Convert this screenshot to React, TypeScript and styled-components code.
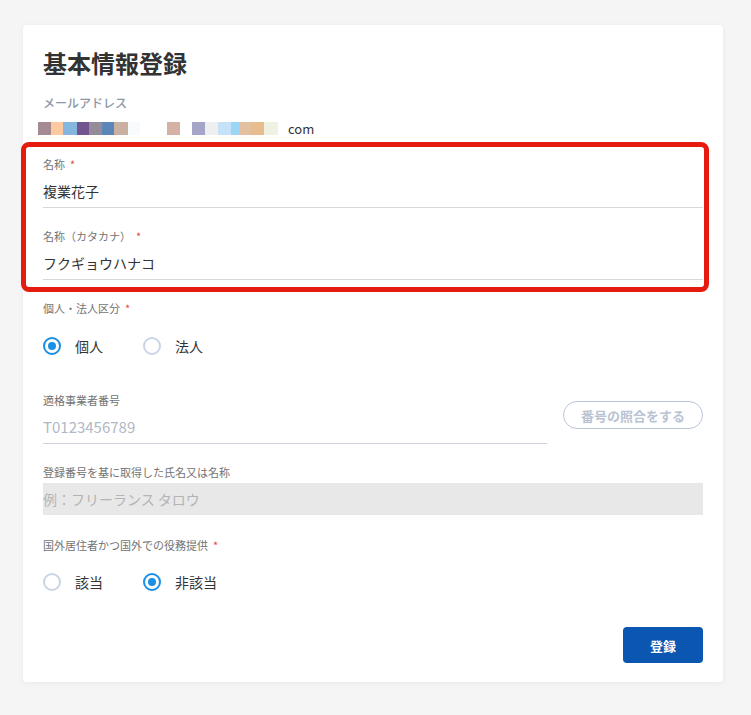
import React from 'react';
import styled, { createGlobalStyle } from 'styled-components';

const GlobalStyle = createGlobalStyle`
	body {
		margin: 0;
		background: #f5f5f5;
		font-family: 'Noto Sans CJK JP', 'Noto Sans', sans-serif;
	}
`;

const Page = styled.div`
	padding: 25px 28px 30px 23px;
`;

const Card = styled.div`
	width: 700px;
	box-sizing: border-box;
	padding: 20px 20px 19px;
	background: #fff;
	border-radius: 4px;
	box-shadow: 0 1px 6px rgba(0, 0, 0, 0.05);
`;

const Title = styled.h1`
	margin: 0;
	font-size: 24px;
	line-height: 36px;
	font-weight: 700;
	color: #333;
`;

const EmailLabel = styled.div`
	margin-top: 14px;
	font-size: 12px;
	line-height: 16px;
	font-weight: 500;
	color: #8b96a6;
`;

const EmailRow = styled.div`
	margin-top: 7px;
	margin-left: -5px;
	height: 20px;
	display: flex;
	align-items: center;
`;

const Pixel = styled.span<{ $w: number; $c: string; $ml?: number }>`
	display: inline-block;
	width: ${(p) => p.$w}px;
	height: 13px;
	margin-left: ${(p) => p.$ml || 0}px;
	background: ${(p) => p.$c};
`;

const EmailDomain = styled.span`
	margin-left: 10px;
	font-size: 13px;
	color: #333;
`;

const Highlight = styled.div`
	position: relative;
	margin-top: 18px;

	&::after {
		content: '';
		position: absolute;
		top: -14px;
		left: -22px;
		right: -6px;
		bottom: -12px;
		border: 5px solid #e61b10;
		border-radius: 8px;
		pointer-events: none;
	}
`;

const Field = styled.div<{ $mt?: number }>`
	display: flex;
	flex-direction: column;
	margin-top: ${(p) => p.$mt || 0}px;
`;

const Label = styled.label`
	font-size: 11px;
	line-height: 16px;
	color: #737373;
`;

const Required = styled.span`
	margin-left: 5px;
	color: #e5483c;
	font-size: 11px;
`;

const TextInput = styled.input<{ $line?: string }>`
	height: 36px;
	box-sizing: border-box;
	padding: 3px 0 0;
	border: none;
	border-bottom: 1px solid ${(p) => p.$line || '#d8d8d8'};
	background: transparent;
	font-family: inherit;
	font-size: 14px;
	color: #333;
	outline: none;
	width: 100%;

	&::placeholder {
		color: #b1b8c4;
		font-size: 15px;
	}
`;

const RadioRow = styled.div<{ $mt: number }>`
	display: flex;
	align-items: center;
	gap: 40px;
	height: 24px;
	margin-top: ${(p) => p.$mt}px;
`;

const RadioOption = styled.label`
	display: flex;
	align-items: center;
	gap: 14px;
	font-size: 14px;
	color: #333;
`;

const RadioMark = styled.span<{ $checked?: boolean }>`
	width: 18px;
	height: 18px;
	box-sizing: border-box;
	border-radius: 50%;
	border: 2px solid ${(p) => (p.$checked ? '#1a8fe3' : '#c9d5e4')};
	display: flex;
	align-items: center;
	justify-content: center;

	&::after {
		content: '';
		width: 8px;
		height: 8px;
		border-radius: 50%;
		background: ${(p) => (p.$checked ? '#1a8fe3' : 'transparent')};
	}
`;

const InvoiceRow = styled.div`
	display: grid;
	grid-template-columns: 1fr 140px;
	gap: 16px;
	align-items: center;
	margin-top: 34px;
`;

const VerifyButton = styled.button`
	height: 28px;
	border: 1px solid #b9c5d8;
	border-radius: 14px;
	background: #fff;
	color: #b9c3d3;
	font-family: inherit;
	font-size: 13px;
	font-weight: 700;
	padding: 0;
	margin-top: -6px;
`;

const GrayBox = styled.input`
	margin-top: 3px;
	height: 32px;
	box-sizing: border-box;
	border: none;
	padding: 0;
	background: #e8e8e8;
	font-family: inherit;
	font-size: 14px;
	outline: none;

	&::placeholder {
		color: #b4b4b4;
	}
`;

const Footer = styled.div`
	display: flex;
	justify-content: flex-end;
	margin-top: 33px;
`;

const SubmitButton = styled.button`
	width: 80px;
	height: 36px;
	border: none;
	border-radius: 4px;
	background: #0a56b0;
	color: #fff;
	font-family: inherit;
	font-size: 13px;
	font-weight: 700;
`;

const pixels: { w: number; c: string; ml?: number }[] = [
	{ w: 13, c: '#a68a93' },
	{ w: 12, c: '#fdc99e' },
	{ w: 14, c: '#85b6e0' },
	{ w: 12, c: '#72548e' },
	{ w: 13, c: '#958c9a' },
	{ w: 12, c: '#5a86b8' },
	{ w: 14, c: '#c9b0a0' },
	{ w: 12, c: '#f8fbfb' },
	{ w: 13, c: '#d4b0a5', ml: 27 },
	{ w: 13, c: '#a5a5c8', ml: 12 },
	{ w: 13, c: '#efefef' },
	{ w: 13, c: '#c5e2f8' },
	{ w: 8, c: '#9dd5f5' },
	{ w: 12, c: '#e2c0a0' },
	{ w: 13, c: '#e8bd8d' },
	{ w: 14, c: '#eff2e2' },
];

const App: React.FC = () => {
	return (
		<>
			<GlobalStyle />
			<Page>
				<Card>
					<Title>基本情報登録</Title>
					<EmailLabel>メールアドレス</EmailLabel>
					<EmailRow>
						{pixels.map((p, i) => (
							<Pixel key={i} $w={p.w} $c={p.c} $ml={p.ml} />
						))}
						<EmailDomain>com</EmailDomain>
					</EmailRow>

					<Highlight>
						<Field>
							<Label>
								名称<Required>*</Required>
							</Label>
							<TextInput readOnly defaultValue="複業花子" />
						</Field>
						<Field $mt={20}>
							<Label>
								名称（カタカナ）<Required>*</Required>
							</Label>
							<TextInput readOnly defaultValue="フクギョウハナコ" />
						</Field>
					</Highlight>

					<Field $mt={20}>
						<Label>
							個人・法人区分<Required>*</Required>
						</Label>
						<RadioRow $mt={18}>
							<RadioOption>
								<RadioMark $checked />
								個人
							</RadioOption>
							<RadioOption>
								<RadioMark />
								法人
							</RadioOption>
						</RadioRow>
					</Field>

					<InvoiceRow>
						<Field>
							<Label>適格事業者番号</Label>
							<TextInput $line="#ccd3dd" placeholder="T0123456789" />
						</Field>
						<VerifyButton>番号の照合をする</VerifyButton>
					</InvoiceRow>

					<Field $mt={20}>
						<Label>登録番号を基に取得した氏名又は名称</Label>
						<GrayBox disabled placeholder="例：フリーランス タロウ" />
					</Field>

					<Field $mt={22}>
						<Label>
							国外居住者かつ国外での役務提供<Required>*</Required>
						</Label>
						<RadioRow $mt={17}>
							<RadioOption>
								<RadioMark />
								該当
							</RadioOption>
							<RadioOption>
								<RadioMark $checked />
								非該当
							</RadioOption>
						</RadioRow>
					</Field>

					<Footer>
						<SubmitButton>登録</SubmitButton>
					</Footer>
				</Card>
			</Page>
		</>
	);
};

export default App;
